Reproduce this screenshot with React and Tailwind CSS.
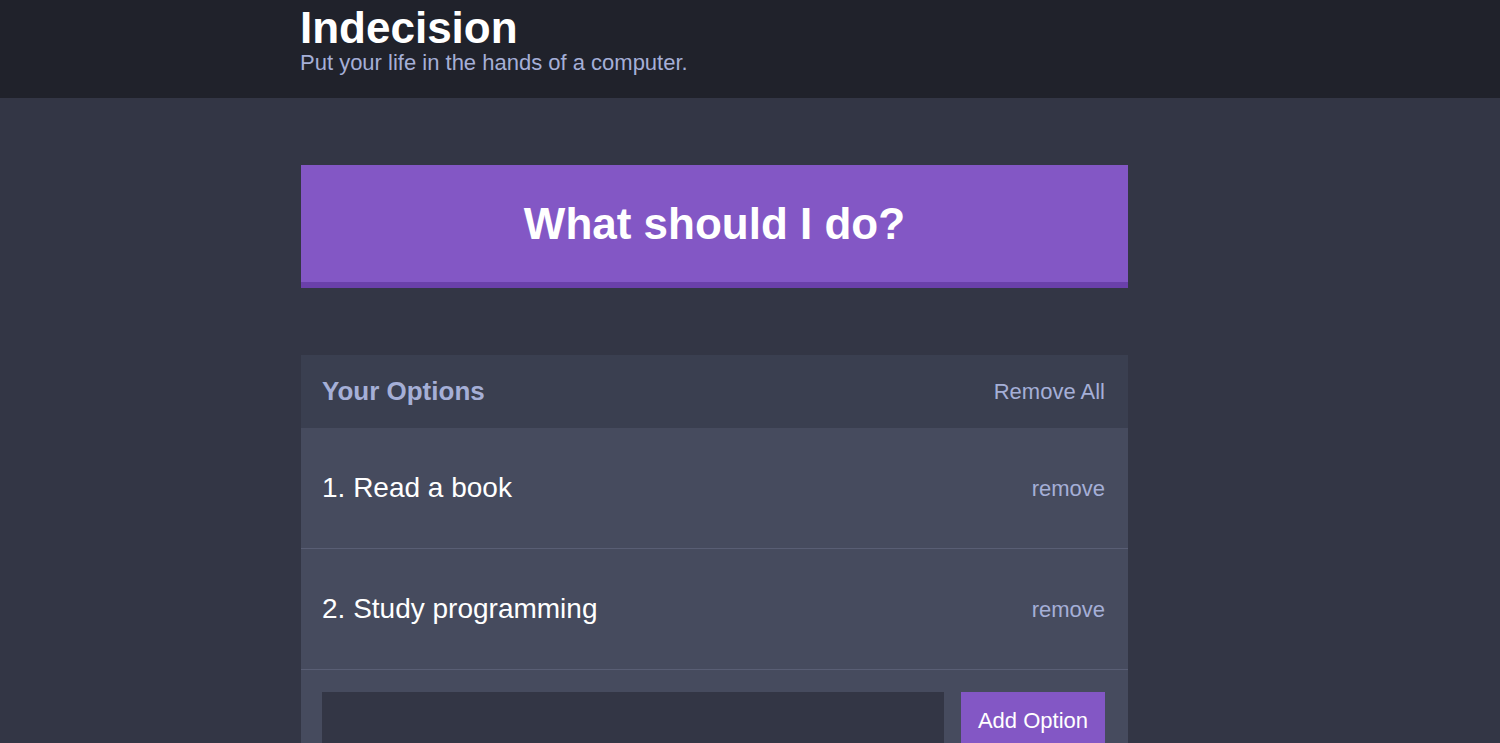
export default function App() {
  const options = ['Read a book', 'Study programming'];
  return (
    <div className="min-h-[743px] bg-[#333645] font-['Liberation_Sans',Arial,sans-serif]">
      <header className="h-[98px] bg-[#20222b] pl-[300px] pt-[6px]">
        <h1 className="text-[44px] font-bold leading-[44px] text-white">Indecision</h1>
        <p className="text-[22px] leading-[26px] text-[#a5afd7]">Put your life in the hands of a computer.</p>
      </header>
      <main className="pl-[301px] pt-[67px]">
        <div className="w-[827px]">
          <button className="flex h-[123px] w-full items-center justify-center border-b-[6px] border-[#6a40aa] bg-[#8357c5] text-[44px] font-bold text-white">
            What should I do?
          </button>
          <section className="mt-[67px]">
            <div className="flex h-[73px] items-center justify-between bg-[#3a3f50] pl-[21px] pr-[23px]">
              <h3 className="text-[26px] font-bold text-[#a5afd7]">Your Options</h3>
              <button className="text-[22px] text-[#a5afd7]">Remove All</button>
            </div>
            {options.map((opt, i) => (
              <div
                key={opt}
                className="flex h-[121px] items-center justify-between border-b border-[#595e74] bg-[#464b5e] pl-[21px] pr-[23px]"
              >
                <p className="text-[28px] text-white">
                  {i + 1}. {opt}
                </p>
                <button className="text-[22px] text-[#a5afd7]">remove</button>
              </div>
            ))}
            <form className="flex gap-[17px] bg-[#464b5e] pl-[21px] pr-[23px] pt-[22px] pb-[20px]">
              <input className="h-[56px] flex-1 bg-[#333645] outline-none" />
              <button className="h-[56px] bg-[#8357c5] px-[17px] text-[22px] text-white">Add Option</button>
            </form>
          </section>
        </div>
      </main>
    </div>
  );
}
